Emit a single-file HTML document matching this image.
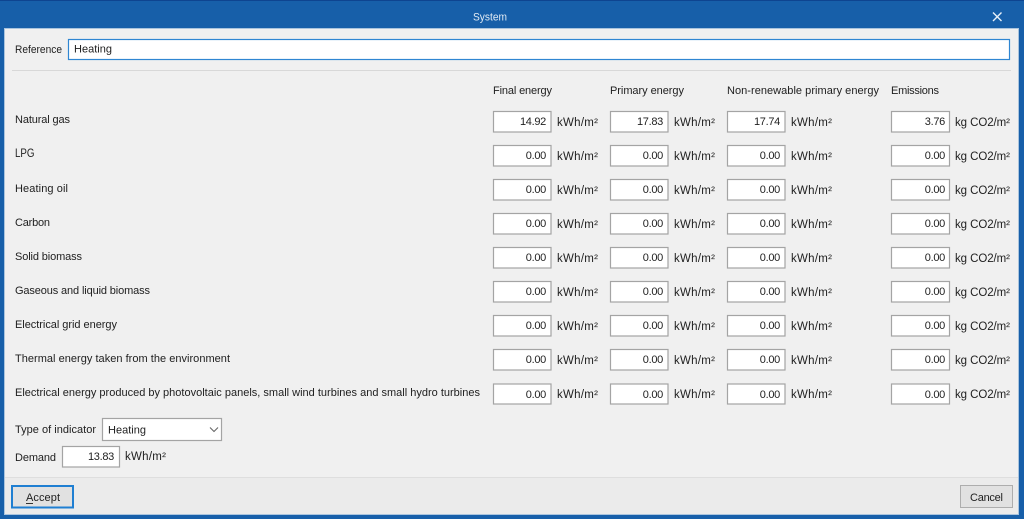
<!DOCTYPE html>
<html><head><meta charset="utf-8"><title>System</title>
<style>
html,body{margin:0;padding:0;width:1024px;height:519px;overflow:hidden;background:#f0f0f0}
svg{display:block;position:absolute;left:0;top:0}
text{font-family:"Liberation Sans",sans-serif;font-size:11px;fill:#1e1e1e}
.i{fill:#fff;stroke:#a4a4a4;stroke-width:1.2}
.r{text-anchor:end;font-size:11px;letter-spacing:-0.3px}
.u{font-size:11.5px}
</style></head><body>
<svg width="1024" height="519" viewBox="0 0 1024 519" xmlns="http://www.w3.org/2000/svg">
<rect width="1024" height="519" fill="#175fa9"/>
<rect x="0" y="0" width="1024" height="1" fill="#0e4490"/>
<rect x="4.5" y="28.5" width="1014" height="486" fill="#f0f0f0" stroke="#a9c4de"/>
<text x="473" y="20.5" textLength="34" lengthAdjust="spacingAndGlyphs" style="fill:#dfe9f3">System</text>
<path d="M993 12.5l8.5 8.5M1001.5 12.5l-8.5 8.5" stroke="#e8f0f8" stroke-width="1.4" fill="none"/>

<text x="15" y="53" textLength="47" lengthAdjust="spacingAndGlyphs">Reference</text>
<rect x="68.5" y="39.5" width="941" height="20" fill="#fff" stroke="#2f86d2" stroke-width="1.2"/>
<text x="74" y="52.5" textLength="38">Heating</text>
<rect x="12" y="70" width="999" height="1" fill="#d8d8d8"/>

<text x="493" y="94" textLength="59">Final energy</text>
<text x="610" y="94" textLength="74">Primary energy</text>
<text x="727" y="94" textLength="152">Non-renewable primary energy</text>
<text x="891" y="94" textLength="48">Emissions</text>

<text x="15" y="123" textLength="55">Natural gas</text>
<text x="15" y="157" style="font-size:11.5px" textLength="19.5" lengthAdjust="spacingAndGlyphs">LPG</text>
<text x="15" y="192" textLength="53">Heating oil</text>
<text x="15" y="226" textLength="35">Carbon</text>
<text x="15" y="260" textLength="67">Solid biomass</text>
<text x="15" y="294" textLength="135">Gaseous and liquid biomass</text>
<text x="15" y="328" textLength="102">Electrical grid energy</text>
<text x="15" y="362" textLength="215">Thermal energy taken from the environment</text>
<text x="15" y="396" textLength="465">Electrical energy produced by photovoltaic panels, small wind turbines and small hydro turbines</text>

<rect class="i" x="493.5" y="111.5" width="57.5" height="20.5"/><text class="r" x="546" y="125">14.92</text><text class="u" x="557" y="126" textLength="41">kWh/m²</text>
<rect class="i" x="610.5" y="111.5" width="57.5" height="20.5"/><text class="r" x="663" y="125">17.83</text><text class="u" x="674" y="126" textLength="41">kWh/m²</text>
<rect class="i" x="727.5" y="111.5" width="57.5" height="20.5"/><text class="r" x="780" y="125">17.74</text><text class="u" x="791" y="126" textLength="41">kWh/m²</text>
<rect class="i" x="891.5" y="111.5" width="58" height="20.5"/><text class="r" x="945" y="125">3.76</text><text class="u" x="955" y="126" textLength="55">kg CO2/m²</text>

<rect class="i" x="493.5" y="145.5" width="57.5" height="20.5"/><text class="r" x="546" y="159">0.00</text><text class="u" x="557" y="160" textLength="41">kWh/m²</text>
<rect class="i" x="610.5" y="145.5" width="57.5" height="20.5"/><text class="r" x="663" y="159">0.00</text><text class="u" x="674" y="160" textLength="41">kWh/m²</text>
<rect class="i" x="727.5" y="145.5" width="57.5" height="20.5"/><text class="r" x="780" y="159">0.00</text><text class="u" x="791" y="160" textLength="41">kWh/m²</text>
<rect class="i" x="891.5" y="145.5" width="58" height="20.5"/><text class="r" x="945" y="159">0.00</text><text class="u" x="955" y="160" textLength="55">kg CO2/m²</text>

<rect class="i" x="493.5" y="179.5" width="57.5" height="20.5"/><text class="r" x="546" y="193">0.00</text><text class="u" x="557" y="194" textLength="41">kWh/m²</text>
<rect class="i" x="610.5" y="179.5" width="57.5" height="20.5"/><text class="r" x="663" y="193">0.00</text><text class="u" x="674" y="194" textLength="41">kWh/m²</text>
<rect class="i" x="727.5" y="179.5" width="57.5" height="20.5"/><text class="r" x="780" y="193">0.00</text><text class="u" x="791" y="194" textLength="41">kWh/m²</text>
<rect class="i" x="891.5" y="179.5" width="58" height="20.5"/><text class="r" x="945" y="193">0.00</text><text class="u" x="955" y="194" textLength="55">kg CO2/m²</text>

<rect class="i" x="493.5" y="213.5" width="57.5" height="20.5"/><text class="r" x="546" y="227">0.00</text><text class="u" x="557" y="228" textLength="41">kWh/m²</text>
<rect class="i" x="610.5" y="213.5" width="57.5" height="20.5"/><text class="r" x="663" y="227">0.00</text><text class="u" x="674" y="228" textLength="41">kWh/m²</text>
<rect class="i" x="727.5" y="213.5" width="57.5" height="20.5"/><text class="r" x="780" y="227">0.00</text><text class="u" x="791" y="228" textLength="41">kWh/m²</text>
<rect class="i" x="891.5" y="213.5" width="58" height="20.5"/><text class="r" x="945" y="227">0.00</text><text class="u" x="955" y="228" textLength="55">kg CO2/m²</text>

<rect class="i" x="493.5" y="247.5" width="57.5" height="20.5"/><text class="r" x="546" y="261">0.00</text><text class="u" x="557" y="262" textLength="41">kWh/m²</text>
<rect class="i" x="610.5" y="247.5" width="57.5" height="20.5"/><text class="r" x="663" y="261">0.00</text><text class="u" x="674" y="262" textLength="41">kWh/m²</text>
<rect class="i" x="727.5" y="247.5" width="57.5" height="20.5"/><text class="r" x="780" y="261">0.00</text><text class="u" x="791" y="262" textLength="41">kWh/m²</text>
<rect class="i" x="891.5" y="247.5" width="58" height="20.5"/><text class="r" x="945" y="261">0.00</text><text class="u" x="955" y="262" textLength="55">kg CO2/m²</text>

<rect class="i" x="493.5" y="281.5" width="57.5" height="20.5"/><text class="r" x="546" y="295">0.00</text><text class="u" x="557" y="296" textLength="41">kWh/m²</text>
<rect class="i" x="610.5" y="281.5" width="57.5" height="20.5"/><text class="r" x="663" y="295">0.00</text><text class="u" x="674" y="296" textLength="41">kWh/m²</text>
<rect class="i" x="727.5" y="281.5" width="57.5" height="20.5"/><text class="r" x="780" y="295">0.00</text><text class="u" x="791" y="296" textLength="41">kWh/m²</text>
<rect class="i" x="891.5" y="281.5" width="58" height="20.5"/><text class="r" x="945" y="295">0.00</text><text class="u" x="955" y="296" textLength="55">kg CO2/m²</text>

<rect class="i" x="493.5" y="315.5" width="57.5" height="20.5"/><text class="r" x="546" y="329">0.00</text><text class="u" x="557" y="330" textLength="41">kWh/m²</text>
<rect class="i" x="610.5" y="315.5" width="57.5" height="20.5"/><text class="r" x="663" y="329">0.00</text><text class="u" x="674" y="330" textLength="41">kWh/m²</text>
<rect class="i" x="727.5" y="315.5" width="57.5" height="20.5"/><text class="r" x="780" y="329">0.00</text><text class="u" x="791" y="330" textLength="41">kWh/m²</text>
<rect class="i" x="891.5" y="315.5" width="58" height="20.5"/><text class="r" x="945" y="329">0.00</text><text class="u" x="955" y="330" textLength="55">kg CO2/m²</text>

<rect class="i" x="493.5" y="349.5" width="57.5" height="20.5"/><text class="r" x="546" y="363">0.00</text><text class="u" x="557" y="364" textLength="41">kWh/m²</text>
<rect class="i" x="610.5" y="349.5" width="57.5" height="20.5"/><text class="r" x="663" y="363">0.00</text><text class="u" x="674" y="364" textLength="41">kWh/m²</text>
<rect class="i" x="727.5" y="349.5" width="57.5" height="20.5"/><text class="r" x="780" y="363">0.00</text><text class="u" x="791" y="364" textLength="41">kWh/m²</text>
<rect class="i" x="891.5" y="349.5" width="58" height="20.5"/><text class="r" x="945" y="363">0.00</text><text class="u" x="955" y="364" textLength="55">kg CO2/m²</text>

<rect class="i" x="493.5" y="384" width="57.5" height="20"/><text class="r" x="546" y="398">0.00</text><text class="u" x="557" y="398" textLength="41">kWh/m²</text>
<rect class="i" x="610.5" y="384" width="57.5" height="20"/><text class="r" x="663" y="398">0.00</text><text class="u" x="674" y="398" textLength="41">kWh/m²</text>
<rect class="i" x="727.5" y="384" width="57.5" height="20"/><text class="r" x="780" y="398">0.00</text><text class="u" x="791" y="398" textLength="41">kWh/m²</text>
<rect class="i" x="891.5" y="384" width="58" height="20"/><text class="r" x="945" y="398">0.00</text><text class="u" x="955" y="398" textLength="55">kg CO2/m²</text>

<text x="15" y="433" textLength="81">Type of indicator</text>
<rect class="i" x="102.5" y="418.5" width="119" height="22"/>
<text x="108" y="433.5" textLength="38">Heating</text>
<path d="M210 427.5l4 4 4-4" stroke="#666" stroke-width="1.1" fill="none"/>

<text x="15" y="461" textLength="41">Demand</text>
<rect class="i" x="62.5" y="446.5" width="57" height="20.5"/>
<text class="r" x="114" y="460">13.83</text>
<text class="u" x="125" y="460" textLength="41">kWh/m²</text>

<rect x="5" y="477" width="1013" height="37" fill="#ebebeb"/>
<rect x="5" y="477" width="1013" height="1" fill="#dedede"/>
<rect x="12" y="486" width="61" height="21.5" fill="#e1e1e1" stroke="#1f7fd2" stroke-width="2"/>
<text x="26" y="501" textLength="34">Accept</text>
<rect x="26" y="503" width="7" height="1" fill="#333"/>
<rect x="960.5" y="485.5" width="52" height="22" fill="#e1e1e1" stroke="#adadad"/>
<text x="970" y="501" textLength="33">Cancel</text>
</svg>
</body></html>
